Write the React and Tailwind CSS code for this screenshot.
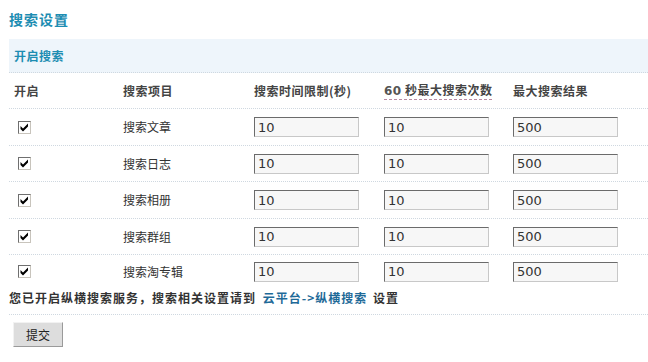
import React from 'react';

const rows = [
  { name: '搜索文章', time: '10', count: '10', max: '500' },
  { name: '搜索日志', time: '10', count: '10', max: '500' },
  { name: '搜索相册', time: '10', count: '10', max: '500' },
  { name: '搜索群组', time: '10', count: '10', max: '500' },
  { name: '搜索淘专辑', time: '10', count: '10', max: '500' },
];

function CheckBox() {
  return (
    <span className="ml-[4px] w-[13px] h-[13px] border border-t-[#6f6f6f] border-l-[#6f6f6f] border-b-[#c8c4bc] border-r-[#c8c4bc] bg-white flex items-center justify-center">
      <svg width="11" height="11" viewBox="0 0 11 11">
        <path d="M1.5 4 L4 6.5 L9 1.5 L9 4.5 L4 9.5 L1.5 7 Z" fill="#000" />
      </svg>
    </span>
  );
}

function Field({ value }) {
  return (
    <input
      type="text"
      defaultValue={value}
      className="w-[105px] h-[20px] pl-[3px] bg-[#f7f7f7] border border-t-[#6b6b6b] border-l-[#6b6b6b] border-b-[#c8c8c8] border-r-[#c8c8c8] text-[13px] text-[#333] font-['DejaVu_Sans',sans-serif] outline-none"
    />
  );
}

export default function App() {
  return (
    <div className="w-[648px] h-[362px] bg-white overflow-hidden font-['Noto_Sans_CJK_SC',sans-serif] text-[12px] text-[#333]">
      <div className="pl-[9px]">
        {/* Title */}
        <h1 className="h-[39px] flex items-center text-[14px] font-bold tracking-[1px] text-[#1d8db2]">
          搜索设置
        </h1>

        {/* Section bar */}
        <div className="h-[34px] flex items-center pl-[5px] bg-[#eef5fb] border-b border-dotted border-[#cfd8e0] text-[#1d8db2] font-bold tracking-[0.5px]">
          开启搜索
        </div>

        {/* Header row */}
        <div className="grid grid-cols-[109px_131px_130px_129px_1fr] h-[36px] items-center border-b border-dotted border-[#cfd8e0] font-bold text-[#444] tracking-[0.5px]">
          <div className="pl-[5px]">开启</div>
          <div className="pl-[5px]">搜索项目</div>
          <div className="pl-[5px]">搜索时间限制(秒)</div>
          <div className="pl-[5px]">
            <span className="border-b border-dashed border-[#b98aa3] pb-[1px]">
              <span className="font-['DejaVu_Sans',sans-serif] text-[#555]">60</span> 秒最大搜索次数
            </span>
          </div>
          <div className="pl-[5px]">最大搜索结果</div>
        </div>

        {/* Data rows */}
        {rows.map((r, i) => {
          const last = i === rows.length - 1;
          const h = last ? 'h-[33px]' : i % 2 === 0 ? 'h-[37px]' : 'h-[36px]';
          return (
            <div
              key={r.name}
              className={`grid grid-cols-[109px_131px_130px_129px_1fr] items-center ${h} ${
                last ? '' : 'border-b border-dotted border-[#cfd8e0]'
              }`}
            >
              <div className="pl-[5px] flex">
                <CheckBox />
              </div>
              <div className="pl-[5px]">{r.name}</div>
              <div className="pl-[5px] flex">
                <Field value={r.time} />
              </div>
              <div className="pl-[5px] flex">
                <Field value={r.count} />
              </div>
              <div className="pl-[5px] flex">
                <Field value={r.max} />
              </div>
            </div>
          );
        })}

        {/* Notice */}
        <div className="pt-[2px] pb-[8px] leading-[16px] border-b border-dotted border-[#cfd8e0] font-bold text-[#333] tracking-[1px]">
          您已开启纵横搜索服务，搜索相关设置请到{' '}
          <a href="#" className="ml-[3px] text-[#1f6a98]">云平台-&gt;纵横搜索</a>{' '}
          <span className="ml-[2px]">设置</span>
        </div>

        {/* Submit */}
        <button
          type="button"
          className="mt-[7px] ml-[4px] w-[50px] h-[25px] bg-[#dddddd] border border-t-[#f2f2f2] border-l-[#f2f2f2] border-b-[#9a9a9a] border-r-[#9a9a9a] text-[12px] text-[#222]"
        >
          提交
        </button>
      </div>
    </div>
  );
}
